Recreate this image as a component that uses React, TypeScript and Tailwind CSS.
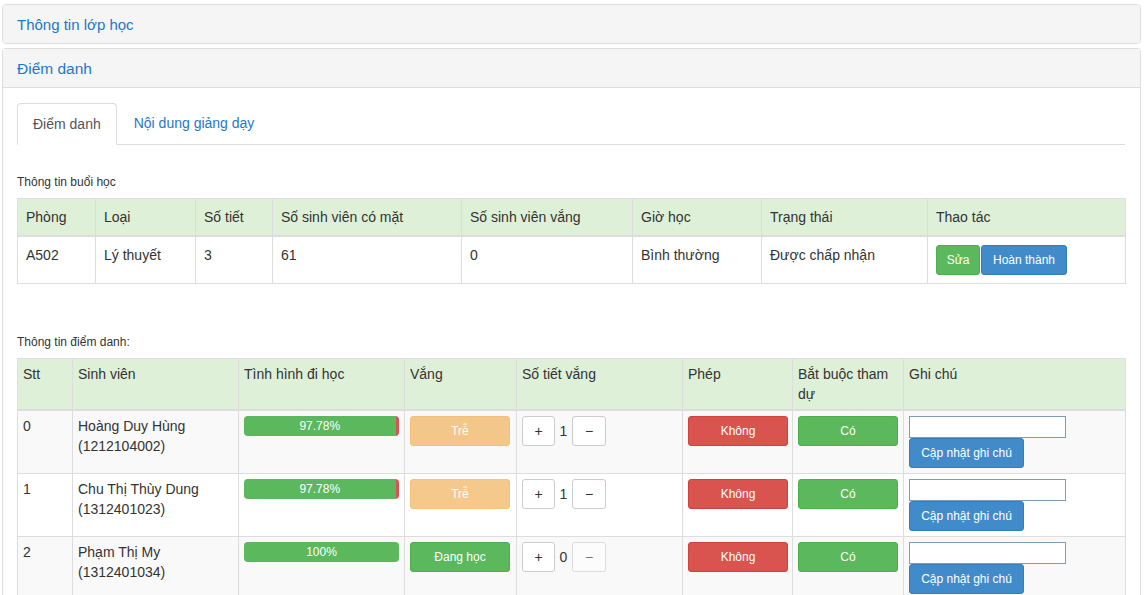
import React from "react";

const blue = "text-[#1f77c9]";

const sessionCols = [78, 100, 77, 189, 171, 129, 166, 198];
const sessionHead = [
  "Phòng",
  "Loại",
  "Số tiết",
  "Số sinh viên có mặt",
  "Số sinh viên vắng",
  "Giờ học",
  "Trạng thái",
  "Thao tác",
];

const attCols = [55, 166, 166, 112, 166, 110, 111, 222];
const attHead = [
  "Stt",
  "Sinh viên",
  "Tình hình đi học",
  "Vắng",
  "Số tiết vắng",
  "Phép",
  "Bắt buộc tham dự",
  "Ghi chú",
];

const students = [
  { name: "Hoàng Duy Hùng", code: "1212104002", pct: 97.78, status: "late", count: 1 },
  { name: "Chu Thị Thùy Dung", code: "1312401023", pct: 97.78, status: "late", count: 1 },
  { name: "Phạm Thị My", code: "1312401034", pct: 100, status: "present", count: 0 },
];

function Progress({ pct }: { pct: number }) {
  const rest = +(100 - pct).toFixed(2);
  return (
    <div className="flex h-[20px] w-full overflow-hidden rounded-[4px] bg-[#f5f5f5] text-[12px] leading-[20px] text-white shadow-[inset_0_1px_2px_rgba(0,0,0,0.1)]">
      <div style={{ width: `${pct}%` }} className="whitespace-nowrap bg-[#5cb85c] text-center">
        {pct}%
      </div>
      {rest > 0 && <div style={{ width: `${rest}%` }} className="bg-[#d9534f]" title={`${rest}%`} />}
    </div>
  );
}

function Btn({
  children,
  tone,
  className = "",
}: {
  children: React.ReactNode;
  tone: "green" | "blue" | "red" | "orange" | "white";
  className?: string;
}) {
  const tones = {
    green: "bg-[#5cb85c] border-[#4cae4c] text-white",
    blue: "bg-[#428bca] border-[#357ebd] text-white",
    red: "bg-[#d9534f] border-[#d43f3a] text-white",
    orange: "bg-[#f0ad4e] border-[#eea236] text-white opacity-65",
    white: "bg-white border-[#ccc] text-[#333]",
  };
  return (
    <button
      type="button"
      className={`inline-flex h-[30px] items-center justify-center rounded-[3px] border text-[12px] leading-[18px] ${tones[tone]} ${className}`}
    >
      {children}
    </button>
  );
}

export default function App() {
  return (
    <div className="ml-[2px] mr-[3px] pt-[4px] font-['Liberation_Sans',Arial,sans-serif] text-[14px] leading-[20px] text-[#333]">
      <div className="mb-[4px] rounded-[4px] border border-[#ddd] bg-white">
        <div className={`rounded-[3px] bg-[#f5f5f5] px-[14px] pb-[9px] pt-[11px] text-[15px] leading-[18px] ${blue}`}>
          Thông tin lớp học
        </div>
      </div>

      <div className="rounded-t-[4px] border border-b-0 border-[#ddd] bg-white">
        <div className={`border-b border-[#ddd] bg-[#f5f5f5] px-[14px] pb-[9px] pt-[11px] text-[15.5px] leading-[18px] ${blue}`}>
          Điểm danh
        </div>
        <div className="py-[15px] pl-[14px] pr-[15px]">
          <div className="flex border-b border-[#ddd]">
            <div className="-mb-px rounded-t-[4px] border border-[#ddd] border-b-white bg-white px-[15px] py-[10px] text-[#555]">
              Điểm danh
            </div>
            <div className={`ml-[2px] px-[15px] py-[10px] ${blue}`}>Nội dung giảng dạy</div>
          </div>

          <div className="mb-[7px] mt-[29px] text-[12px] leading-[17px]">Thông tin buổi học</div>
          <table className="w-[1108px] table-fixed border-collapse">
            <colgroup>
              {sessionCols.map((w, i) => (
                <col key={i} style={{ width: w }} />
              ))}
            </colgroup>
            <thead>
              <tr className="bg-[#dff0d8]">
                {sessionHead.map((h) => (
                  <th key={h} className="border border-b-2 border-[#ddd] p-[8px] text-left font-normal">
                    {h}
                  </th>
                ))}
              </tr>
            </thead>
            <tbody>
              <tr>
                {["A502", "Lý thuyết", "3", "61", "0", "Bình thường", "Được chấp nhận"].map((c, i) => (
                  <td key={i} className="border border-[#ddd] p-[8px] align-top">
                    {c}
                  </td>
                ))}
                <td className="border border-[#ddd] p-[8px] align-top">
                  <div className="flex gap-[1px]">
                    <Btn tone="green" className="w-[44px]">Sửa</Btn>
                    <Btn tone="blue" className="w-[86px]">Hoàn thành</Btn>
                  </div>
                </td>
              </tr>
            </tbody>
          </table>

          <div className="mb-[7px] mt-[50px] text-[12px] leading-[17px]">Thông tin điểm danh:</div>
          <table className="w-[1108px] table-fixed border-collapse">
            <colgroup>
              {attCols.map((w, i) => (
                <col key={i} style={{ width: w }} />
              ))}
            </colgroup>
            <thead>
              <tr className="bg-[#dff0d8]">
                {attHead.map((h) => (
                  <th key={h} className="border border-b-2 border-[#ddd] p-[5px] text-left align-top font-normal">
                    {h}
                  </th>
                ))}
              </tr>
            </thead>
            <tbody>
              {students.map((s, i) => (
                <tr key={s.code} className={i % 2 === 0 ? "bg-[#f9f9f9]" : "bg-white"}>
                  <td className="border border-[#ddd] p-[5px] align-top">{i}</td>
                  <td className="border border-[#ddd] p-[5px] align-top">
                    {s.name}
                    <br />({s.code})
                  </td>
                  <td className="border border-[#ddd] p-[5px] align-top">
                    <Progress pct={s.pct} />
                  </td>
                  <td className="border border-[#ddd] p-[5px] align-top">
                    {s.status === "late" ? (
                      <Btn tone="orange" className="w-[100px]">Trễ</Btn>
                    ) : (
                      <Btn tone="green" className="w-[100px]">Đang học</Btn>
                    )}
                  </td>
                  <td className="border border-[#ddd] p-[5px] align-top">
                    <div className="flex items-center">
                      <Btn tone="white" className="w-[33px] text-[14px]">+</Btn>
                      <span className="w-[17px] text-center">{s.count}</span>
                      <Btn tone="white" className={`w-[34px] text-[14px] ${s.count === 0 ? "opacity-65" : ""}`}>
                        −
                      </Btn>
                    </div>
                  </td>
                  <td className="border border-[#ddd] p-[5px] align-top">
                    <Btn tone="red" className="w-[100px]">Không</Btn>
                  </td>
                  <td className="border border-[#ddd] p-[5px] align-top">
                    <Btn tone="green" className="w-[100px]">Có</Btn>
                  </td>
                  <td className="border border-[#ddd] p-[5px] align-top">
                    <input className="block h-[22px] w-[157px] border border-[#7f9db9] bg-white" />
                    <Btn tone="blue" className="w-[115px]">Cập nhật ghi chú</Btn>
                  </td>
                </tr>
              ))}
            </tbody>
          </table>
        </div>
      </div>
    </div>
  );
}
